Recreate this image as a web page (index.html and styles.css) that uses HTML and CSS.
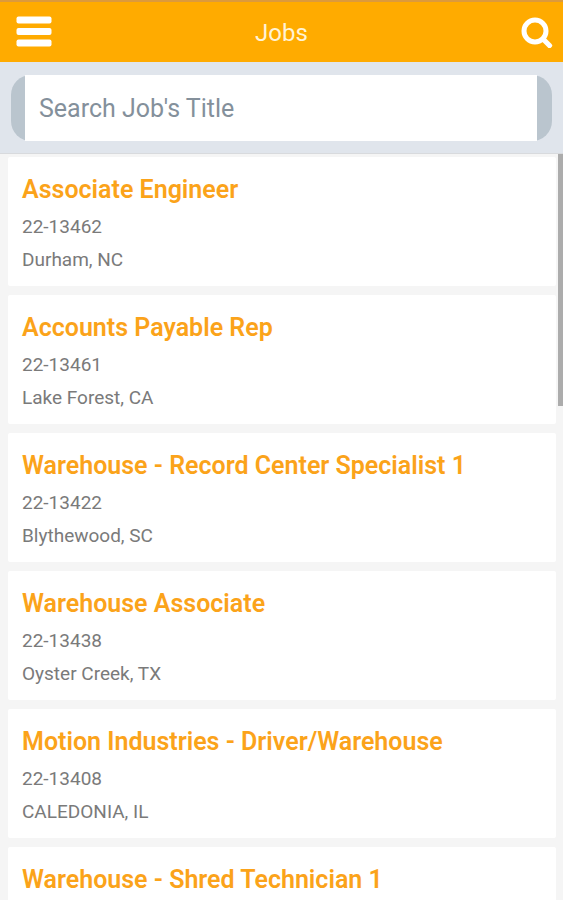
FILE: index.html
```html
<!DOCTYPE html>
<html lang="en">
<head>
    <meta charset="UTF-8">
    <meta name="viewport" content="width=device-width, initial-scale=1">
    <title>Jobs</title>
    <link rel="stylesheet" href="styles.css">
</head>
<body>
<header class="topbar">
    <button class="icon-button" type="button" aria-label="Menu">
        <svg width="36" height="32" viewBox="0 0 36 32" fill="#fff">
            <rect x="0.5" y="0.5" width="35" height="7" rx="2"/>
            <rect x="0.5" y="12" width="35" height="7" rx="2"/>
            <rect x="0.5" y="23.5" width="35" height="7" rx="2"/>
        </svg>
    </button>
    <h1 class="topbar-title">Jobs</h1>
    <button class="icon-button" type="button" aria-label="Search">
        <svg width="32" height="32" viewBox="0 0 32 32" fill="none" stroke="#fff">
            <circle cx="14" cy="15" r="11" stroke-width="5"/>
            <path d="M22 23l6.5 6.5" stroke-width="5.2" stroke-linecap="round"/>
        </svg>
    </button>
</header>

<form class="search">
    <div class="search-box">
        <input class="search-input" type="text" placeholder="Search Job's Title" aria-label="Search Job's Title">
    </div>
</form>

<main class="content">
    <ul class="job-list">
        <li class="job">
            <h2 class="job-title"><a href="#">Associate Engineer</a></h2>
            <p class="job-info">22-13462</p>
            <p class="job-info">Durham, NC</p>
        </li>
        <li class="job">
            <h2 class="job-title"><a href="#">Accounts Payable Rep</a></h2>
            <p class="job-info">22-13461</p>
            <p class="job-info">Lake Forest, CA</p>
        </li>
        <li class="job">
            <h2 class="job-title"><a href="#">Warehouse - Record Center Specialist 1</a></h2>
            <p class="job-info">22-13422</p>
            <p class="job-info">Blythewood, SC</p>
        </li>
        <li class="job">
            <h2 class="job-title"><a href="#">Warehouse Associate</a></h2>
            <p class="job-info">22-13438</p>
            <p class="job-info">Oyster Creek, TX</p>
        </li>
        <li class="job">
            <h2 class="job-title"><a href="#">Motion Industries - Driver/Warehouse</a></h2>
            <p class="job-info">22-13408</p>
            <p class="job-info">CALEDONIA, IL</p>
        </li>
        <li class="job">
            <h2 class="job-title"><a href="#">Warehouse - Shred Technician 1</a></h2>
        </li>
    </ul>
    <div class="scroll-thumb"></div>
</main>
</body>
</html>
```

FILE: styles.css
```css
* {
    box-sizing: border-box;
}

body {
    display: flex;
    flex-direction: column;
    height: 100vh;
    margin: 0;
    overflow: hidden;
    background: #f5f5f5;
    font-family: Roboto, "Liberation Sans", sans-serif;
}

/* top bar */
.topbar {
    display: flex;
    align-items: center;
    height: 62px;
    padding: 0 10px;
    border-top: 2px solid #dc9a3c;
    background: #ffab00;
}

.topbar-title {
    flex: 1;
    margin: 0;
    padding-top: 2px;
    color: #fff3d6;
    font-size: 24px;
    font-weight: 400;
    line-height: 32px;
    text-align: center;
}

.icon-button {
    display: flex;
    justify-content: flex-end;
    width: 42px;
    padding: 0;
    border: 0;
    background: none;
    cursor: pointer;
}

/* search */
.search {
    padding: 13px 11px 12px;
    border-bottom: 1px solid #d8dadd;
    background: #e0e5ec;
}

.search-box {
    padding: 0 15px 0 14px;
    border-radius: 20px;
    background: #bac5ce;
}

.search-input {
    display: block;
    width: 100%;
    height: 66px;
    padding: 0 14px;
    border: 0;
    border-radius: 0;
    outline: 0;
    background: #fff;
    color: #333;
    font-family: inherit;
    font-size: 25px;
}

.search-input::placeholder {
    color: #84909b;
    opacity: 1;
}

/* job list */
.content {
    position: relative;
    flex: 1;
    min-height: 0;
}

.job-list {
    display: flex;
    flex-direction: column;
    gap: 9px;
    height: 100%;
    margin: 0;
    padding: 3px 7px 0 8px;
    overflow-y: auto;
    scrollbar-width: none;
    list-style: none;
}

.job {
    flex: none;
    min-height: 129px;
    padding: 16px 14px 9px;
    border-radius: 2px;
    background: #fff;
}

.job-title {
    margin: 0 0 3px;
    font-size: 25px;
    font-weight: 600;
    line-height: 34px;
}

.job-title a {
    color: #fba31a;
    text-decoration: none;
}

.job-info {
    margin: 0;
    color: #7a7a7a;
    font-size: 19px;
    font-weight: 400;
    line-height: 33px;
}

.scroll-thumb {
    position: absolute;
    top: 0;
    right: 0;
    width: 5px;
    height: 252px;
    background: #acacac;
}
```
